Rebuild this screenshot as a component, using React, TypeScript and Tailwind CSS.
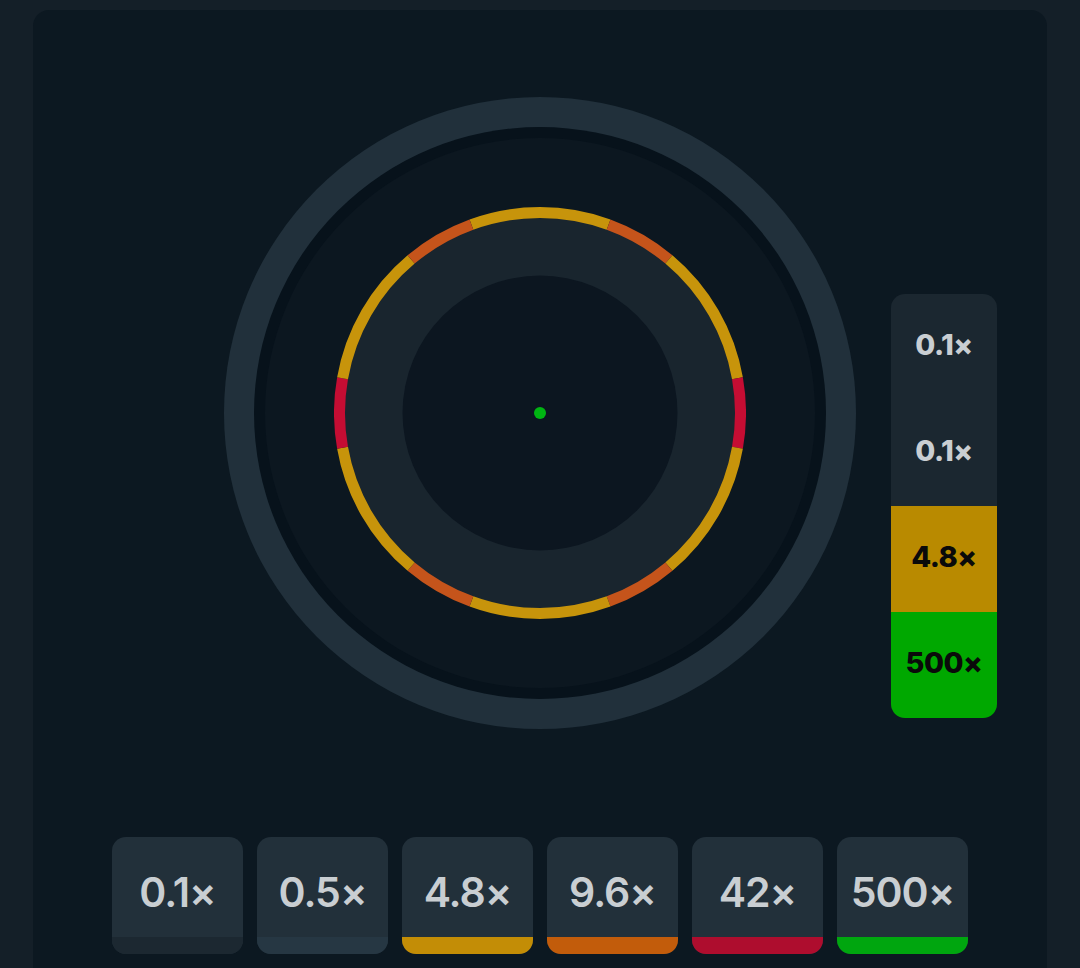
import React from "react";

const segs = [
  { from: -20, to: 20, color: "#c7940b" },
  { from: 20, to: 40, color: "#c5541b" },
  { from: 40, to: 80, color: "#c7940b" },
  { from: 80, to: 100, color: "#c50d33" },
  { from: 100, to: 140, color: "#c7940b" },
  { from: 140, to: 160, color: "#c5541b" },
  { from: 160, to: 200, color: "#c7940b" },
  { from: 200, to: 220, color: "#c5541b" },
  { from: 220, to: 260, color: "#c7940b" },
  { from: 260, to: 280, color: "#c50d33" },
  { from: 280, to: 320, color: "#c7940b" },
  { from: 320, to: 340, color: "#c5541b" },
];

const pt = (deg: number, r: number, c: number) => {
  const a = ((deg - 90) * Math.PI) / 180;
  return [c + r * Math.cos(a), c + r * Math.sin(a)];
};

const arc = (from: number, to: number, r: number, c: number) => {
  const [x1, y1] = pt(from, r, c);
  const [x2, y2] = pt(to, r, c);
  const large = to - from > 180 ? 1 : 0;
  return `M ${x1} ${y1} A ${r} ${r} 0 ${large} 1 ${x2} ${y2}`;
};

const Wheel = () => {
  const size = 412;
  const c = size / 2;
  return (
    <div className="w-[632px] h-[632px] rounded-full bg-[#21303b] p-[30px]">
      <div className="w-full h-full rounded-full bg-[#07121b] p-[11px]">
        <div className="w-full h-full rounded-full bg-[#0c1720] flex items-center justify-center">
          <svg width={size} height={size} viewBox={`0 0 ${size} ${size}`}>
            <circle cx={c} cy={c} r={196} fill="#19252e" />
            <circle cx={c} cy={c} r={137.5} fill="#0c1620" />
            {segs.map((s, i) => (
              <path key={i} d={arc(s.from, s.to, 200.5, c)} stroke={s.color} strokeWidth={11} fill="none" />
            ))}
            <circle cx={c} cy={c} r={6} fill="#00b512" />
          </svg>
        </div>
      </div>
    </div>
  );
};

const barItems = [
  { label: "0.1×", cls: "bg-[#1b2730] text-[#c9ced2]" },
  { label: "0.1×", cls: "bg-[#1b2730] text-[#c9ced2]" },
  { label: "4.8×", cls: "bg-[#b98a00] text-[#0a0a0a]" },
  { label: "500×", cls: "bg-[#00a800] text-[#0a0a0a]" },
];

const tiles = [
  { label: "0.1×", strip: "bg-[#1c2831]" },
  { label: "0.5×", strip: "bg-[#263743]" },
  { label: "4.8×", strip: "bg-[#c38d06]" },
  { label: "9.6×", strip: "bg-[#c25c0b]" },
  { label: "42×", strip: "bg-[#ae0d2e]" },
  { label: "500×", strip: "bg-[#00a60f]" },
];

export default function App() {
  return (
    <div className="min-h-[968px] bg-[#141f28] pt-[10px] px-[33px] overflow-hidden" style={{ fontFamily: "Inter, Lato, sans-serif" }}>
      <div className="rounded-t-2xl bg-[#0c1821] h-[980px] pt-[87px]">
        <div className="grid grid-cols-[1fr_632px_1fr]">
          <div />
          <Wheel />
          <div className="pt-[197px] pl-[35px]">
            <div className="w-[106px] rounded-[14px] overflow-hidden flex flex-col">
              {barItems.map((b, i) => (
                <div key={i} className={`h-[106px] flex items-center justify-center pb-[4px] text-[29px] font-extrabold tracking-[-0.5px] ${b.cls}`}>
                  {b.label}
                </div>
              ))}
            </div>
          </div>
        </div>
        <div className="mt-[108px] flex justify-center gap-[14px]">
          {tiles.map((t, i) => (
            <div key={i} className="w-[131px] h-[117px] rounded-[14px] overflow-hidden bg-[#22303a] flex flex-col">
              <div className="flex-1 flex items-center justify-center pt-[11px] text-[41px] font-semibold tracking-[-1px] text-[#c9ced2]">
                {t.label}
              </div>
              <div className={`h-[17px] ${t.strip}`} />
            </div>
          ))}
        </div>
      </div>
    </div>
  );
}
